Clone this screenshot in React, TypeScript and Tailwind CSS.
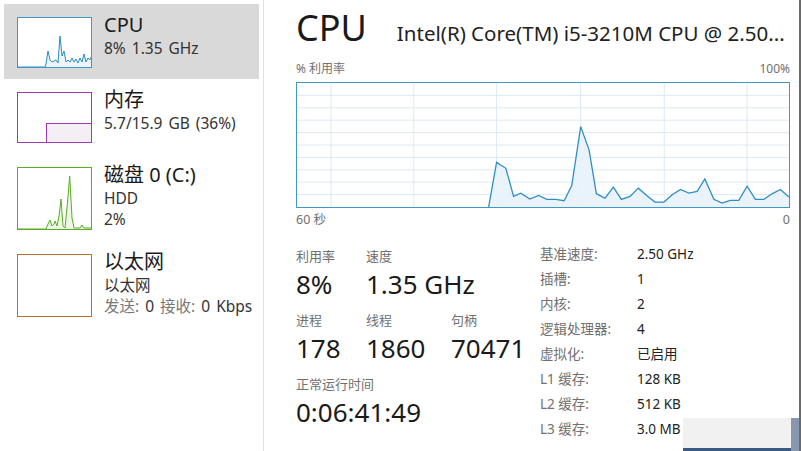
import React from 'react'

const cpuPts: [number, number][] = [
  [192, 125], [200, 80], [209.3, 86], [217, 114.3], [224.3, 111], [233.3, 117], [242, 113.3],
  [250.3, 117.3], [259.3, 117.3], [267.7, 118.7], [275.3, 103.3], [284.3, 44], [292.7, 67.7],
  [300, 111.7], [308.7, 116], [317, 105], [325, 117.3], [333.7, 114.3], [342, 106], [350.3, 113.3],
  [358.7, 120], [367.7, 120], [376, 112.7], [384.3, 107.3], [392.7, 111], [401, 109.3],
  [408.7, 96.7], [417.7, 117.3], [426, 121], [434.3, 118.3], [442.7, 118.3], [451, 104],
  [459.3, 117.3], [467.7, 117.3], [476, 111.7], [484.3, 107.3], [493, 115],
]

const miniCpu: [number, number][] = [
  [0, 49], [27, 49], [28, 46], [30, 33], [32, 42], [34, 44], [36, 43], [38, 42], [40, 45], [42, 18],
  [44, 38], [46, 33], [48, 44], [50, 42], [52, 44], [54, 40], [56, 44], [58, 41], [60, 45], [62, 40],
  [64, 44], [66, 36], [68, 44], [70, 40], [72, 42], [74, 37],
]

const miniDisk: [number, number][] = [
  [0, 61], [28, 61], [30, 56], [32, 52], [34, 58], [36, 56], [37, 53], [39, 58], [41, 48], [43, 31],
  [45, 58], [47, 60], [49, 40], [51.7, 8], [54, 50], [56, 60], [62, 60], [64, 57], [66, 60], [74, 60],
]

const toStr = (p: [number, number][]) => p.map(([x, y]) => `${x},${y}`).join(' ')

function Spark({ pts, w, h, stroke, fill }: { pts: [number, number][]; w: number; h: number; stroke: string; fill: string }) {
  const area = `0,${h} ${toStr(pts)} ${w},${h}`
  return (
    <svg width={w} height={h} viewBox={`0 0 ${w} ${h}`} className="block">
      <polygon points={area} fill={fill} />
      <polyline points={toStr(pts)} fill="none" stroke={stroke} strokeWidth="1" />
    </svg>
  )
}

function SideItem({
  selected,
  thumb,
  title,
  children,
  tall,
}: {
  selected?: boolean
  thumb: React.ReactNode
  title: string
  children: React.ReactNode
  tall?: boolean
}) {
  return (
    <div className={`flex w-[255px] pl-[13px] pt-[13px] gap-[12px] ${tall ? 'h-[87px]' : 'h-[75px]'} ${selected ? 'bg-[#d9d9d9]' : ''}`}>
      {thumb}
      <div className="-mt-[5px] flex flex-col">
        <div className="text-[20px] leading-[26px] text-[#1a1a1a]">{title}</div>
        <div className="text-[15.5px] leading-[21px] text-[#333] [word-spacing:2px]">{children}</div>
      </div>
    </div>
  )
}

function Stat({ label, value, className = '' }: { label: string; value: string; className?: string }) {
  return (
    <div className={className}>
      <div className="text-[13px] leading-[19px] text-[#707070]">{label}</div>
      <div className="text-[26px] leading-[36px]">{value}</div>
    </div>
  )
}

const rows: [string, string][] = [
  ['基准速度:', '2.50 GHz'],
  ['插槽:', '1'],
  ['内核:', '2'],
  ['逻辑处理器:', '4'],
  ['虚拟化:', '已启用'],
  ['L1 缓存:', '128 KB'],
  ['L2 缓存:', '512 KB'],
  ['L3 缓存:', '3.0 MB'],
]

export default function App() {
  const vLines = [34, 117, 200, 284, 368, 451]
  const hLines = Array.from({ length: 9 }, (_, i) => 12.5 * (i + 1))

  return (
    <div className="relative flex w-[801px] h-[451px] overflow-hidden bg-white border-r-2 border-[#6a6a6a] font-['Noto_Sans','Noto_Sans_CJK_SC',sans-serif]">
      {/* left list */}
      <aside className="w-[264px] shrink-0 border-r border-[#e2e2e2] pt-1 pl-1">
        <SideItem
          selected
          title="CPU"
          thumb={
            <div className="w-[75px] h-[51px] border border-[#3f98c8] bg-white shrink-0">
              <Spark pts={miniCpu} w={73} h={49} stroke="#2a8cc2" fill="#eef5fa" />
            </div>
          }
        >
          8% 1.35 GHz
        </SideItem>
        <SideItem
          title="内存"
          thumb={
            <div className="relative w-[75px] h-[51px] border border-[#9a3cb8] bg-white shrink-0">
              <div className="absolute left-[28px] right-0 bottom-0 h-[19px] border-t border-l border-[#9a3cb8] bg-[#f3eff4]" />
            </div>
          }
        >
          5.7/15.9 GB (36%)
        </SideItem>
        <SideItem
          tall
          title="磁盘 0 (C:)"
          thumb={
            <div className="w-[75px] h-[63px] border border-[#5aae22] bg-white shrink-0">
              <Spark pts={miniDisk} w={73} h={61} stroke="#5aae22" fill="#eef6e8" />
            </div>
          }
        >
          <div>HDD</div>
          <div>2%</div>
        </SideItem>
        <SideItem
          tall
          title="以太网"
          thumb={<div className="w-[75px] h-[63px] border border-[#b96f2a] bg-white shrink-0" />}
        >
          <div>以太网</div>
          <div>
            <span className="text-[#777]">发送:</span> 0 <span className="text-[#777]">接收:</span> 0 Kbps
          </div>
        </SideItem>
      </aside>

      {/* detail */}
      <main className="flex-1 pl-[32px] pr-[8px] text-[#1a1a1a]">
        <div className="flex items-baseline gap-[30px] h-[58px] pt-[4px]">
          <div className="text-[36px] leading-[48px]">CPU</div>
          <div className="text-[20.5px] whitespace-nowrap text-[#222]">Intel(R) Core(TM) i5-3210M CPU @ 2.50...</div>
        </div>
        <div className="flex justify-between text-[12px] leading-[18px] text-[#707070] w-[494px] mt-[2px]">
          <span>% 利用率</span>
          <span>100%</span>
        </div>
        <div className="w-[494px] h-[126px] mt-[4px] border border-[#3f98c8]">
          <svg width={492} height={124} viewBox="0 0 493 125" preserveAspectRatio="none" className="block">
            {hLines.map((y) => (
              <line key={y} x1={0} x2={493} y1={y} y2={y} stroke="#dbeaf3" strokeWidth="1" />
            ))}
            {vLines.map((x) => (
              <line key={x} x1={x} x2={x} y1={0} y2={125} stroke="#dbeaf3" strokeWidth="1" />
            ))}
            <polygon points={`192,125 ${toStr(cpuPts)} 493,125`} fill="#e8f2f9" fillOpacity="0.9" />
            <polyline points={toStr(cpuPts)} fill="none" stroke="#2e8ec4" strokeWidth="1.3" />
          </svg>
        </div>
        <div className="flex justify-between text-[12.5px] leading-[18px] text-[#707070] w-[494px] mt-[3px]">
          <span>60 秒</span>
          <span>0</span>
        </div>

        <div className="flex mt-[18px]">
          <div className="w-[244px]">
            <div className="flex">
              <Stat className="w-[70px]" label="利用率" value="8%" />
              <Stat label="速度" value="1.35 GHz" />
            </div>
            <div className="flex mt-[9px]">
              <Stat className="w-[70px]" label="进程" value="178" />
              <Stat className="w-[85px]" label="线程" value="1860" />
              <Stat label="句柄" value="70471" />
            </div>
            <Stat className="mt-[9px]" label="正常运行时间" value="0:06:41:49" />
          </div>
          <div className="-mt-[5px]">
            {rows.map(([k, v]) => (
              <div key={k} className="flex h-[25px] items-center text-[13.5px]">
                <span className="w-[97px] text-[#707070]">{k}</span>
                <span className="text-[#222]">{v}</span>
              </div>
            ))}
          </div>
        </div>
      </main>

      {/* watermark strip bottom right */}
      <div className="absolute right-0 bottom-0 w-[116px] h-[33px] bg-[#f1f1f1] border-b-[3px] border-[#3b5a82]" />
      <div className="absolute right-0 bottom-0 w-[8px] h-[33px] bg-[#8797ad]" />
    </div>
  )
}
